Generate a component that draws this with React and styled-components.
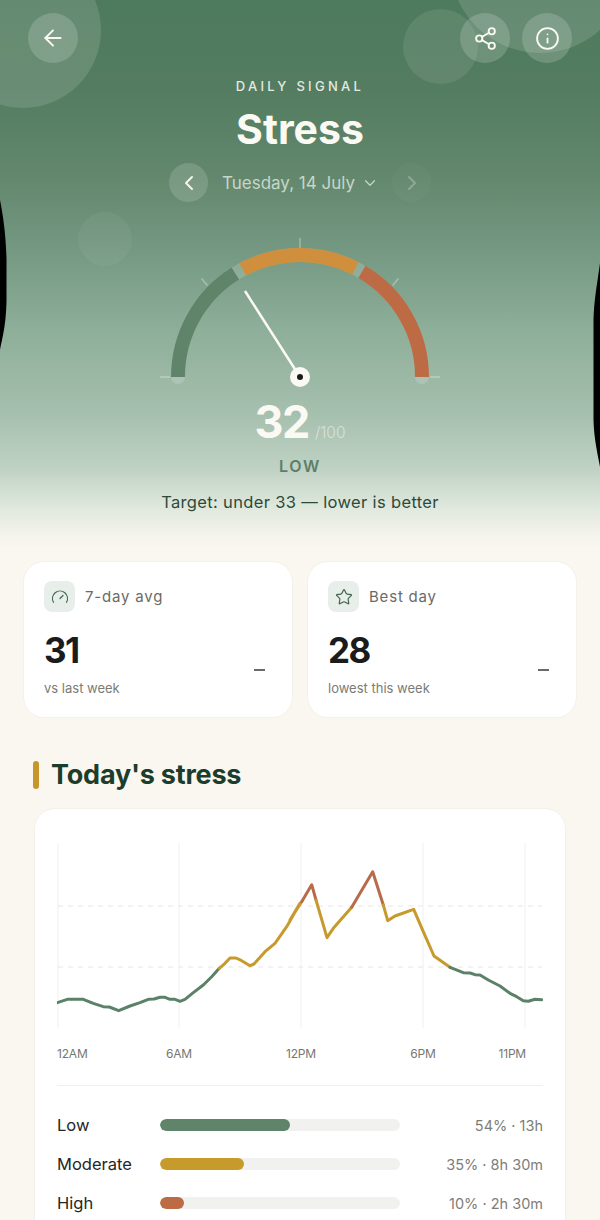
import React from "react";
import styled, { createGlobalStyle } from "styled-components";
import { ArrowLeft, Share2, Info, ChevronLeft, ChevronRight, ChevronDown, Gauge, Star } from "lucide-react";

const Global = createGlobalStyle`
  html, body { margin: 0; padding: 0; background: #faf7f0; }
  * { box-sizing: border-box; }
`;

const Page = styled.div`
  position: relative;
  width: 600px;
  height: 1220px;
  overflow: hidden;
  background: #faf7f0;
  font-family: "Inter", "Liberation Sans", sans-serif;
`;

const Hero = styled.header`
  position: relative;
  height: 546px;
  padding: 13px 28px 0;
  display: flex;
  flex-direction: column;
  align-items: center;
  background: linear-gradient(180deg, #4e7a5d 0%, #537c60 16%, #62876c 32%, #739781 45%, #8dae98 60%, #a6c0ae 76%, #c0d2c4 86%, #e0e8de 93%, #f4f3ec 98%, #f8f6ef 100%);
`;

const Bubble = styled.div`
  position: absolute;
  left: ${p => p.$x - p.$r}px;
  top: ${p => p.$y - p.$r}px;
  width: ${p => p.$r * 2}px;
  height: ${p => p.$r * 2}px;
  border-radius: 50%;
  background: rgba(255, 255, 255, ${p => p.$a});
`;

const Edge = styled.svg`
  position: absolute;
  left: 0;
  top: 0;
  pointer-events: none;
`;

const TopBar = styled.div`
  position: relative;
  width: 100%;
  display: flex;
  justify-content: space-between;
`;

const TopActions = styled.div`
  display: flex;
  gap: 12px;
`;

const RoundButton = styled.button`
  width: 50px;
  height: 50px;
  padding: 0;
  border: 0;
  border-radius: 50%;
  display: flex;
  align-items: center;
  justify-content: center;
  color: #fbf9f3;
  background: rgba(255, 255, 255, 0.17);
`;

const Eyebrow = styled.div`
  position: relative;
  margin-top: 15px;
  font-size: 13px;
  line-height: 16px;
  font-weight: 500;
  letter-spacing: 3.3px;
  color: #e3eae0;
`;

const Title = styled.h1`
  position: relative;
  margin: 11px 0 0;
  font-size: 41px;
  line-height: 48px;
  font-weight: 700;
  color: #fbf9f3;
`;

const DateRow = styled.div`
  position: relative;
  margin-top: 10px;
  display: flex;
  align-items: center;
`;

const DateButton = styled.button`
  width: 39px;
  height: 39px;
  padding: 0;
  border: 0;
  border-radius: 50%;
  display: flex;
  align-items: center;
  justify-content: center;
  color: ${p => (p.$dim ? "rgba(255,255,255,.25)" : "#f4f4ec")};
  background: rgba(255, 255, 255, ${p => (p.$dim ? 0.03 : 0.15)});
`;

const DateLabel = styled.div`
  width: 184px;
  padding-left: 14px;
  display: flex;
  align-items: center;
  gap: 6px;
  font-size: 17px;
  font-weight: 400;
  color: #c6d6c9;
  white-space: nowrap;
`;

const GaugeSvg = styled.svg`
  position: relative;
  display: block;
  margin-top: 35px;
`;

const ScoreRow = styled.div`
  position: relative;
  margin-top: 3px;
  display: flex;
  align-items: baseline;
  justify-content: center;
`;

const Score = styled.div`
  font-size: 45px;
  line-height: 52px;
  font-weight: 700;
  letter-spacing: -1.5px;
  color: #fbf9f3;
`;

const ScoreMax = styled.div`
  margin-left: 6px;
  font-size: 15.5px;
  font-weight: 300;
  color: rgba(255, 255, 255, 0.5);
`;

const Level = styled.div`
  position: relative;
  margin-top: 8px;
  font-size: 16px;
  line-height: 20px;
  font-weight: 600;
  letter-spacing: 1.6px;
  color: #5c7f69;
`;

const Target = styled.div`
  position: relative;
  margin-top: 16px;
  font-size: 16.5px;
  line-height: 20px;
  font-weight: 400;
  letter-spacing: 0.35px;
  color: #2c4a3a;
`;

const StatGrid = styled.section`
  position: relative;
  margin-top: 16px;
  padding: 0 24px;
  display: grid;
  grid-template-columns: 1fr 1fr;
  gap: 16px;
`;

const StatCard = styled.div`
  height: 155px;
  padding: 19px 20px 0;
  border-radius: 20px;
  background: #ffffff;
  box-shadow: 0 0 0 1px #f4f1ea;
  display: flex;
  flex-direction: column;
`;

const StatHead = styled.div`
  display: flex;
  align-items: center;
  gap: 10px;
  font-size: 15px;
  letter-spacing: 0.8px;
  color: #6b6b66;
`;

const IconBox = styled.div`
  width: 31px;
  height: 31px;
  border-radius: 8px;
  display: flex;
  align-items: center;
  justify-content: center;
  color: #416650;
  background: #e8eee9;
`;

const StatBody = styled.div`
  margin-top: 16px;
  display: flex;
  justify-content: space-between;
  align-items: center;
`;

const StatText = styled.div`
  display: flex;
  flex-direction: column;
`;

const StatValue = styled.div`
  font-size: 35px;
  line-height: 44px;
  font-weight: 700;
  letter-spacing: -1.5px;
  color: #1b1b1b;
`;

const StatSub = styled.div`
  margin-top: 8px;
  font-size: 13px;
  line-height: 16px;
  color: #7b7b76;
`;

const StatDash = styled.div`
  width: 11px;
  height: 1.5px;
  margin: 16px 7px 0 0;
  background: #6b6b66;
`;

const SectionHead = styled.div`
  margin: 43px 0 0 33px;
  display: flex;
  align-items: center;
  gap: 12px;
`;

const SectionBar = styled.div`
  width: 6px;
  height: 28px;
  border-radius: 3px;
  background: #c6962d;
`;

const SectionTitle = styled.h2`
  margin: 0;
  font-size: 27px;
  line-height: 30px;
  font-weight: 700;
  letter-spacing: -0.2px;
  color: #1c3d2c;
`;

const ChartCard = styled.section`
  margin: 19px 35px 0;
  padding: 22px 22px 30px;
  border-radius: 20px;
  background: #ffffff;
  box-shadow: 0 0 0 1px #f4f1ea;
`;

const ChartSvg = styled.svg`
  display: block;
`;

const AxisLabel = styled.text`
  font-size: 12px;
  letter-spacing: -0.2px;
  fill: #777772;
`;

const Divider = styled.div`
  height: 1px;
  margin: 20px 0 29px;
  background: #eff0ee;
`;

const Rows = styled.div`
  display: grid;
  row-gap: 19px;
`;

const Row = styled.div`
  display: grid;
  grid-template-columns: 103px 240px 1fr;
  align-items: center;
  height: 20px;
`;

const RowLabel = styled.div`
  font-size: 16.5px;
  color: #262626;
`;

const Track = styled.div`
  height: 12px;
  border-radius: 6px;
  background: #f1f2f0;
  overflow: hidden;
`;

const Fill = styled.div`
  height: 100%;
  border-radius: 6px;
  background: ${p => p.$color};
`;

const RowValue = styled.div`
  text-align: right;
  font-size: 14.5px;
  color: #7d7d78;
  white-space: nowrap;
`;

const C = { green: "#5b8168", amber: "#c79a2d", red: "#b86b4a" };

const L = (pts) => pts.map(([x, y]) => [30 + x / 3, 830 + y / 3]);
const R = (pts) => pts.map(([x, y]) => [280 + x / 3, 850 + y / 3]);

const segments = [
  [C.green, L([[82,518],[112,508],[160,508],[190,520],[220,530],[238,531],[266,542],[300,528],[330,518],[355,508],[372,507],[390,502],[405,502],[420,508],[435,508],[450,514],[465,508],[490,488],[520,465],[545,440],[568,415]])],
  [C.amber, L([[568,415],[585,400],[600,384],[618,384],[635,392],[660,407],[672,402],[705,365],[735,340],[770,290],[810,220]]).concat(R([[30,210],[65,155]]))],
  [C.red, R([[65,155],[95,104],[108,150]])],
  [C.amber, R([[108,150],[141,263],[160,235],[215,172]])],
  [C.red, R([[215,172],[278,65],[310,165]])],
  [C.amber, R([[310,165],[323,212],[345,198],[401,178],[430,245],[462,318],[510,352]])],
  [C.green, R([[510,352],[550,368],[570,369],[585,374],[600,375],[625,390],[660,408],[690,430],[710,440],[730,452],[745,454],[765,448],[785,449]])],
];

const toPath = (pts) => pts.map(([x, y], i) => `${i ? "L" : "M"}${x.toFixed(1)} ${y.toFixed(1)}`).join(" ");

const polar = (deg, r, cx = 160, cy = 140) => {
  const a = (deg * Math.PI) / 180;
  return [cx + r * Math.cos(a), cy - r * Math.sin(a)];
};
const arc = (from, to, r = 122) => {
  const [x1, y1] = polar(from, r);
  const [x2, y2] = polar(to, r);
  return `M${x1.toFixed(2)} ${y1.toFixed(2)} A${r} ${r} 0 0 1 ${x2.toFixed(2)} ${y2.toFixed(2)}`;
};

function GaugeDial() {
  return (
    <GaugeSvg width="320" height="156" viewBox="0 0 320 156">
      <path d={arc(180, 0)} fill="none" stroke="rgba(255,255,255,.16)" strokeWidth="14" strokeLinecap="round" />
      <path d={arc(180, 122)} fill="none" stroke="#5f8469" strokeWidth="14" />
      <path d={arc(118, 63)} fill="none" stroke="#cf8f3c" strokeWidth="14" />
      <path d={arc(59.5, 0)} fill="none" stroke="#bd6b45" strokeWidth="14" />
      <g stroke="rgba(255,255,255,.32)" strokeWidth="1.5">
        <line x1="20" y1="140" x2="30" y2="140" />
        <line x1="290" y1="140" x2="300" y2="140" />
        <line x1="160" y1="1" x2="160" y2="11" />
        <line x1="61.5" y1="41.5" x2="67.5" y2="48.5" />
        <line x1="258.5" y1="41.5" x2="252.5" y2="48.5" />
      </g>
      <line x1="105" y1="54" x2="160" y2="140" stroke="#fbf9f3" strokeWidth="2.5" />
      <circle cx="160" cy="140" r="10" fill="#fbf9f3" />
      <circle cx="160" cy="140" r="3" fill="#1b1b1b" />
    </GaugeSvg>
  );
}

function Chart() {
  return (
    <ChartSvg width="486" height="234" viewBox="57 831 486 234">
      <g stroke="#f0f0ee" strokeWidth="1">
        {[58, 179, 301, 423, 525].map((x) => (
          <line key={x} x1={x} y1="843" x2={x} y2="1028" />
        ))}
      </g>
      <g stroke="#e6e6e2" strokeWidth="1" strokeDasharray="5 5">
        <line x1="58" y1="906" x2="542" y2="906" />
        <line x1="58" y1="967" x2="542" y2="967" />
      </g>
      {segments.map(([color, pts], i) => (
        <path key={i} d={toPath(pts)} fill="none" stroke={color} strokeWidth="3" strokeLinejoin="round" strokeLinecap="round" />
      ))}
      <AxisLabel x="57" y="1058">12AM</AxisLabel>
      <AxisLabel x="179" y="1058" textAnchor="middle">6AM</AxisLabel>
      <AxisLabel x="301" y="1058" textAnchor="middle">12PM</AxisLabel>
      <AxisLabel x="423" y="1058" textAnchor="middle">6PM</AxisLabel>
      <AxisLabel x="526" y="1058" textAnchor="end">11PM</AxisLabel>
    </ChartSvg>
  );
}

const rows = [
  { label: "Low", pct: 54, color: "#5f8469", value: "54% · 13h" },
  { label: "Moderate", pct: 35, color: "#c69a2b", value: "35% · 8h 30m" },
  { label: "High", pct: 10, color: "#bd6b45", value: "10% · 2h 30m" },
];

export default function App() {
  return (
    <Page>
      <Global />
      <Hero>
        <Bubble $x={23} $y={30} $r={78} $a={0.13} />
        <Bubble $x={540} $y={-37} $r={90} $a={0.13} />
        <Bubble $x={440} $y={46} $r={37.5} $a={0.09} />
        <Bubble $x={105} $y={239} $r={27} $a={0.05} />
        <TopBar>
          <RoundButton aria-label="Back"><ArrowLeft size={26} strokeWidth={1.8} /></RoundButton>
          <TopActions>
            <RoundButton aria-label="Share"><Share2 size={25} strokeWidth={1.8} /></RoundButton>
            <RoundButton aria-label="Info"><Info size={25} strokeWidth={1.8} /></RoundButton>
          </TopActions>
        </TopBar>
        <Eyebrow>DAILY SIGNAL</Eyebrow>
        <Title>Stress</Title>
        <DateRow>
          <DateButton aria-label="Previous"><ChevronLeft size={24} strokeWidth={2} /></DateButton>
          <DateLabel>Tuesday, 14 July <ChevronDown size={18} strokeWidth={1.6} /></DateLabel>
          <DateButton $dim aria-label="Next"><ChevronRight size={24} strokeWidth={2} /></DateButton>
        </DateRow>
        <GaugeDial />
        <ScoreRow>
          <Score>32</Score>
          <ScoreMax>/100</ScoreMax>
        </ScoreRow>
        <Level>LOW</Level>
        <Target>Target: under 33 — lower is better</Target>
      </Hero>
      <Edge width="600" height="500" viewBox="0 0 600 500">
        <path d="M0 200 C3 215 6 235 6.5 260 L6.5 300 C6 325 3 335 0 350 Z" fill="#000" />
        <path d="M600 263 C597 285 594 300 593.5 320 L593.5 420 C594 440 598 455 600 467 Z" fill="#000" />
      </Edge>
      <StatGrid>
        <StatCard>
          <StatHead><IconBox><Gauge size={18} strokeWidth={1.6} /></IconBox>7-day avg</StatHead>
          <StatBody>
            <StatText>
              <StatValue>31</StatValue>
              <StatSub>vs last week</StatSub>
            </StatText>
            <StatDash />
          </StatBody>
        </StatCard>
        <StatCard>
          <StatHead><IconBox><Star size={18} strokeWidth={1.6} /></IconBox>Best day</StatHead>
          <StatBody>
            <StatText>
              <StatValue>28</StatValue>
              <StatSub>lowest this week</StatSub>
            </StatText>
            <StatDash />
          </StatBody>
        </StatCard>
      </StatGrid>
      <SectionHead>
        <SectionBar />
        <SectionTitle>Today's stress</SectionTitle>
      </SectionHead>
      <ChartCard>
        <Chart />
        <Divider />
        <Rows>
          {rows.map((r) => (
            <Row key={r.label}>
              <RowLabel>{r.label}</RowLabel>
              <Track><Fill $color={r.color} style={{ width: `${r.pct}%` }} /></Track>
              <RowValue>{r.value}</RowValue>
            </Row>
          ))}
        </Rows>
      </ChartCard>
    </Page>
  );
}
